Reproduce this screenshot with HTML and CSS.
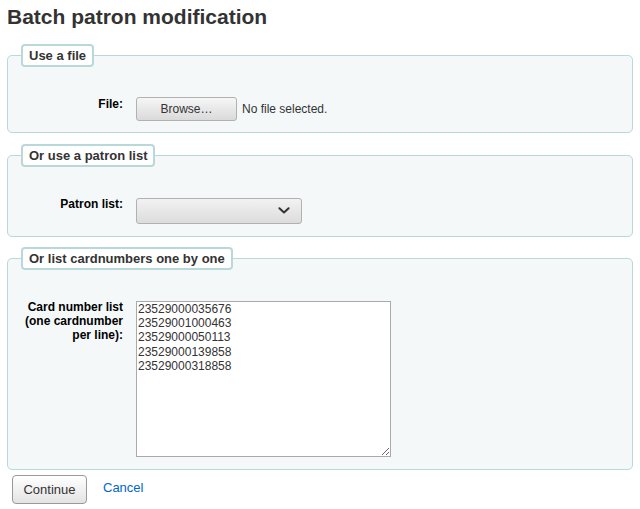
FILE: index.html
```html
<!DOCTYPE html>
<html lang="en">
<head>
<meta charset="utf-8">
<title>Batch patron modification</title>
<link rel="stylesheet" href="styles.css">
</head>
<body>
<h1 class="title">Batch patron modification</h1>
<form class="batch-form">
  <fieldset class="rows">
    <legend>Use a file</legend>
    <div class="row">
      <label class="row-label" for="uploadfile">File:</label>
      <div class="file-input">
        <button type="button" class="browse" id="uploadfile">Browse…</button>
        <span class="file-status">No file selected.</span>
      </div>
    </div>
  </fieldset>
  <fieldset class="rows rows-list">
    <legend>Or use a patron list</legend>
    <div class="row">
      <label class="row-label" for="patron_list">Patron list:</label>
      <div class="select" id="patron_list" role="combobox">
        <svg class="chevron" width="12" height="7" viewBox="0 0 12 7" aria-hidden="true"><path d="M1.4 1.2 L6 5.4 L10.6 1.2" fill="none" stroke="#333" stroke-width="2" stroke-linecap="round" stroke-linejoin="round"/></svg>
      </div>
    </div>
  </fieldset>
  <fieldset class="rows rows-cards">
    <legend>Or list cardnumbers one by one</legend>
    <div class="row">
      <label class="row-label" for="cardnumberlist">Card number list (one cardnumber per line):</label>
      <textarea class="cardlist" id="cardnumberlist">23529000035676
23529001000463
23529000050113
23529000139858
23529000318858</textarea>
    </div>
  </fieldset>
  <div class="actions">
    <button type="button" class="btn-continue">Continue</button>
    <a class="cancel" href="#">Cancel</a>
  </div>
</form>
</body>
</html>
```
FILE: styles.css
```css
html, body {
  margin: 0;
  background: #fff;
}
body {
  padding: 0 7px;
  font-family: "Liberation Sans", Arial, sans-serif;
  color: #333;
}
.title {
  margin: 5px 0 0;
  font-size: 21px;
  line-height: 24px;
  font-weight: bold;
  color: #333;
}
.batch-form {
  margin: 0;
}
fieldset.rows {
  margin: 15px 0 0;
  padding: 30px 13px 11px;
  border: 1px solid #b9d8d9;
  border-radius: 5px;
  background: #f4f8f9;
  min-inline-size: 0;
}
fieldset.rows-list {
  margin-top: 11px;
}
fieldset.rows-cards {
  margin-top: 10px;
}
fieldset.rows legend {
  padding: 2px 6px;
  border: 2px solid #b9d8d9;
  border-radius: 4px;
  background: #fff;
  font-size: 13px;
  line-height: 15px;
  font-weight: bold;
  color: #333;
}
.row {
  display: flex;
  align-items: flex-start;
}
.row-label {
  flex: 0 0 102px;
  width: 102px;
  margin-right: 13px;
  text-align: right;
  font-size: 12px;
  line-height: 14.2px;
  font-weight: bold;
  color: #000;
}
.file-input {
  display: flex;
  align-items: center;
  gap: 5px;
}
.browse {
  box-sizing: border-box;
  width: 101px;
  height: 24px;
  padding: 0;
  border: 1px solid #b1b1b1;
  border-radius: 3px;
  background: linear-gradient(#f6f6f6, #dadada);
  font-family: "Liberation Sans", Arial, sans-serif;
  font-size: 12px;
  color: #333;
}
.file-status {
  font-size: 12px;
  color: #333;
}
.select {
  box-sizing: border-box;
  width: 166px;
  height: 26px;
  margin: 1px 0;
  border: 1px solid #b1b1b1;
  border-radius: 3px;
  background: linear-gradient(#f2f2f2, #dcdcdc);
  display: flex;
  align-items: flex-start;
  justify-content: flex-end;
  padding: 8px 11px 0 0;
}
.chevron {
  display: block;
}
.cardlist {
  box-sizing: border-box;
  width: 255px;
  height: 156px;
  margin: 1px 0;
  padding: 0 1px;
  border: 1px solid #aaa;
  border-radius: 0;
  background: #fff;
  font-family: "Liberation Sans", Arial, sans-serif;
  font-size: 12px;
  line-height: 14.2px;
  color: #333;
  overflow: auto;
}
.actions {
  display: flex;
  align-items: flex-start;
  gap: 16px;
  margin-top: 5px;
  padding-left: 5px;
}
.btn-continue {
  box-sizing: border-box;
  width: 75px;
  height: 29px;
  padding: 0;
  border: 1px solid #999;
  border-radius: 4px;
  background: linear-gradient(#ffffff, #e3e3e3);
  font-family: "Liberation Sans", Arial, sans-serif;
  font-size: 13px;
  color: #333;
}
.cancel {
  margin-top: 5px;
  font-size: 13px;
  line-height: 15px;
  color: #0066cc;
  text-decoration: none;
}
```
